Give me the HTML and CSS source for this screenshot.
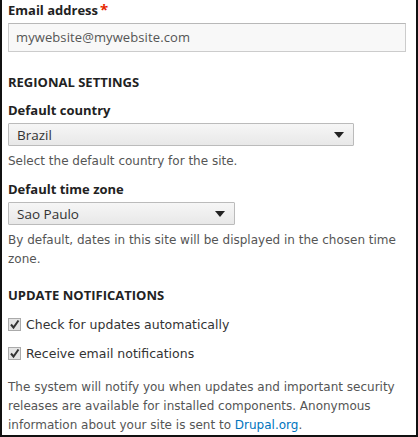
FILE: index.html
```html
<!DOCTYPE html>
<html lang="en">
<head>
<meta charset="utf-8">
<title>Site settings</title>
<link rel="stylesheet" href="styles.css">
</head>
<body>
<div class="frame">
  <div class="field field-email">
    <label class="label">Email address<span class="req">*</span></label>
    <div class="input">mywebsite@mywebsite.com</div>
  </div>

  <h2 class="heading h-regional">REGIONAL SETTINGS</h2>

  <div class="field field-country">
    <label class="label">Default country</label>
    <div class="select select-wide"><span>Brazil</span><span class="arrow"></span></div>
    <div class="desc">Select the default country for the site.</div>
  </div>

  <div class="field field-tz">
    <label class="label">Default time zone</label>
    <div class="select select-narrow"><span>Sao Paulo</span><span class="arrow"></span></div>
    <div class="desc">By default, dates in this site will be displayed in the chosen time zone.</div>
  </div>

  <h2 class="heading h-update">UPDATE NOTIFICATIONS</h2>

  <div class="check check-1"><span class="box"><svg viewBox="0 0 13 13" width="13" height="13"><path d="M3 6.5 L5.5 9.5 L10.5 2.5" fill="none" stroke="#333" stroke-width="2"/></svg></span><span>Check for updates automatically</span></div>
  <div class="check check-2"><span class="box"><svg viewBox="0 0 13 13" width="13" height="13"><path d="M3 6.5 L5.5 9.5 L10.5 2.5" fill="none" stroke="#333" stroke-width="2"/></svg></span><span>Receive email notifications</span></div>

  <p class="para">The system will notify you when updates and important security releases are available for installed components. Anonymous information about your site is sent to <a class="link" href="#">Drupal.org</a>.</p>
</div>
</body>
</html>
```

FILE: styles.css
```css
html, body {
  margin: 0;
  padding: 0;
  background: #fff;
}
.frame {
  box-sizing: border-box;
  width: 418px;
  height: 437px;
  border-left: 2px solid #111;
  border-right: 2px solid #111;
  border-bottom: 2px solid #111;
  padding: 1px 10px 0 6px;
  font-family: "DejaVu Sans", sans-serif;
  color: #333;
  overflow: hidden;
}
.label {
  display: block;
  font-family: "Open Sans", sans-serif;
  font-weight: bold;
  font-size: 13px;
  line-height: 16px;
  color: #222;
}
.req {
  color: #e62600;
  margin-left: 2px;
  font-size: 15px;
}
.input {
  box-sizing: border-box;
  margin-top: 5px;
  height: 29px;
  border: 1px solid #ccc;
  border-top-color: #b8b8b8;
  background: #f8f8f8;
  padding: 0 7px;
  font-family: "Open Sans", sans-serif;
  font-size: 13px;
  letter-spacing: 0.1px;
  line-height: 27px;
  color: #555;
}
.heading {
  margin: 0;
  font-family: "Open Sans", sans-serif;
  font-size: 13px;
  font-weight: bold;
  color: #222;
  line-height: 16px;
}
.h-regional { margin-top: 22px; }
.field-country { margin-top: 12px; }
.select {
  box-sizing: border-box;
  display: flex;
  align-items: center;
  justify-content: space-between;
  margin-top: 5px;
  height: 23px;
  border: 1px solid #bbb;
  border-radius: 1px;
  background: linear-gradient(#f6f6f6, #e8e8e8);
  padding: 0 9px 0 8px;
  font-family: "Open Sans", sans-serif;
  font-size: 13.5px;
  color: #333;
}
.select-wide { width: 346px; }
.select-narrow { width: 227px; }
.arrow {
  width: 0;
  height: 0;
  border-left: 5px solid transparent;
  border-right: 5px solid transparent;
  border-top: 6px solid #222;
}
.desc {
  margin-top: 6px;
  font-size: 12px;
  line-height: 19px;
  color: #555;
}
.field-tz { margin-top: 10px; }
.h-update { margin-top: 18px; }
.check {
  display: flex;
  align-items: center;
  gap: 5px;
  font-size: 12.5px;
  color: #333;
  height: 20px;
}
.check-1 { margin-top: 11px; }
.check-2 { margin-top: 9px; }
.box {
  box-sizing: border-box;
  width: 13px;
  height: 13px;
  border: 1px solid #aaa;
  background: #e4e4e4;
  display: flex;
}
.box svg { display: block; margin: -1px; }
.para {
  margin: 15px 0 0;
  font-size: 12px;
  line-height: 19px;
  color: #555;
}
.link {
  color: #0074bd;
  text-decoration: none;
}
```
